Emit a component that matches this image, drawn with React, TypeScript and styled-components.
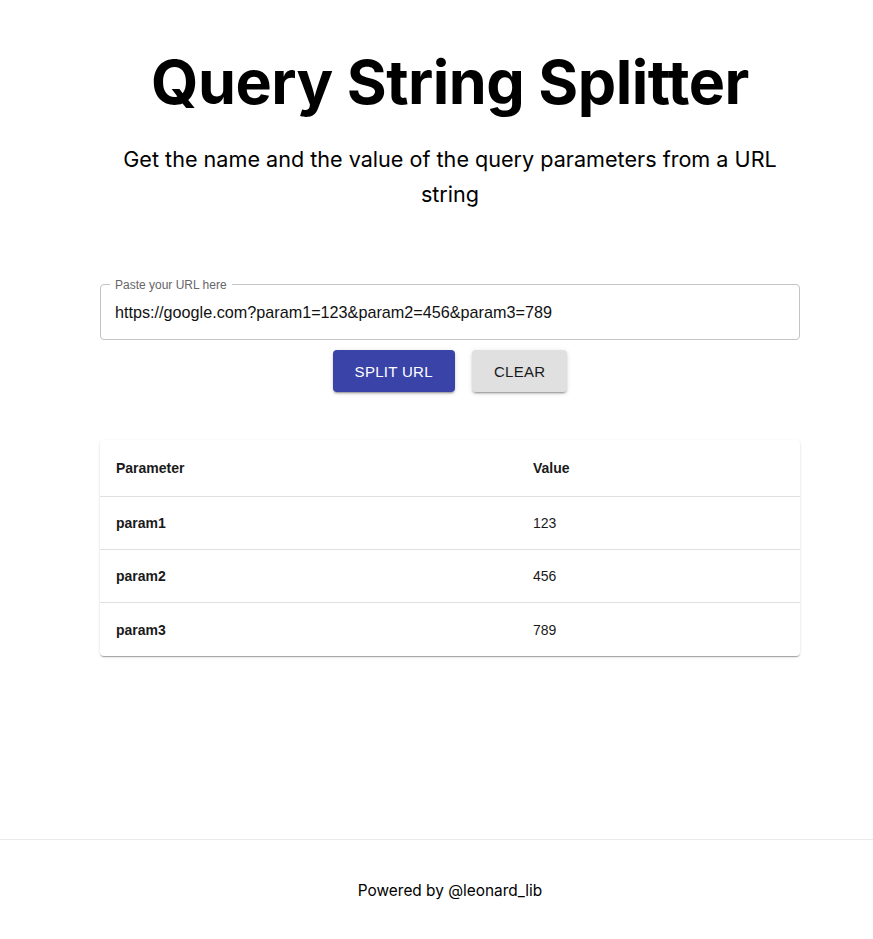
import React, { useState } from "react";
import styled, { createGlobalStyle } from "styled-components";

const Global = createGlobalStyle`
  * { box-sizing: border-box; }
  html, body { margin: 0; padding: 0; background: #fff; }
  body { font-family: Inter, "Noto Sans", sans-serif; color: #000; overflow: hidden; }
`;

const Page = styled.div`
  width: 900px;
  min-height: 939px;
  display: flex;
  flex-direction: column;
`;

const Main = styled.main`
  flex: 1;
  display: flex;
  flex-direction: column;
  align-items: center;
  padding-top: 44px;
`;

const Title = styled.h1`
  margin: 0;
  font-family: Inter, sans-serif;
  font-weight: 700;
  font-size: 61px;
  line-height: 76px;
  letter-spacing: -0.5px;
  text-align: center;
`;

const Subtitle = styled.p`
  margin: 22px 0 0;
  max-width: 680px;
  font-family: Inter, sans-serif;
  font-size: 21.6px;
  line-height: 35px;
  text-align: center;
`;

const Form = styled.div`
  width: 700px;
  margin-top: 72px;
  display: flex;
  flex-direction: column;
  align-items: center;
`;

const Field = styled.div`
  position: relative;
  width: 100%;
  height: 56px;
  padding: 0 14px;
  border: 1px solid #c4c4c4;
  border-radius: 4px;
  display: flex;
  align-items: center;
`;

const FloatLabel = styled.label`
  position: absolute;
  left: 9px;
  top: -7px;
  padding: 0 5px;
  background: #fff;
  font-family: "Liberation Sans", Arial, sans-serif;
  font-size: 12px;
  line-height: 14px;
  color: #666;
`;

const Input = styled.input`
  width: 100%;
  border: none;
  outline: none;
  padding: 0;
  font-family: "Liberation Sans", Arial, sans-serif;
  font-size: 16.2px;
  color: #111;
  background: transparent;
`;

const Buttons = styled.div`
  margin-top: 10px;
  display: flex;
  gap: 17px;
`;

const Button = styled.button<{ $primary?: boolean }>`
  height: 42px;
  padding: 0 22px;
  border: none;
  border-radius: 4px;
  font-family: "Liberation Sans", Arial, sans-serif;
  font-size: 15px;
  letter-spacing: 0.3px;
  text-transform: uppercase;
  cursor: pointer;
  background: ${(p) => (p.$primary ? "#3a43a8" : "#e0e0e0")};
  color: ${(p) => (p.$primary ? "#fff" : "#1a1a1a")};
  box-shadow: 0 3px 1px -2px rgba(0,0,0,0.2), 0 2px 2px 0 rgba(0,0,0,0.14), 0 1px 5px 0 rgba(0,0,0,0.12);
`;

const Card = styled.div`
  width: 700px;
  margin-top: 48px;
  border-radius: 4px;
  background: #fff;
  box-shadow: 0 2px 1px -1px rgba(0,0,0,0.2), 0 1px 1px 0 rgba(0,0,0,0.14), 0 1px 3px 0 rgba(0,0,0,0.12);
  overflow: hidden;
`;

const Row = styled.div<{ $head?: boolean; $last?: boolean }>`
  display: grid;
  grid-template-columns: 417px 1fr;
  height: ${(p) => (p.$head ? "57px" : "53px")};
  border-bottom: ${(p) => (p.$last ? "none" : "1px solid #e0e0e0")};
  align-items: center;
`;

const Cell = styled.div<{ $bold?: boolean }>`
  padding: 0 16px;
  font-family: "Liberation Sans", Arial, sans-serif;
  font-size: 14px;
  font-weight: ${(p) => (p.$bold ? 700 : 400)};
  color: #1a1a1a;
`;

const Footer = styled.footer`
  height: 100px;
  border-top: 1px solid #eaeaea;
  display: flex;
  align-items: center;
  justify-content: center;
  padding-top: 2px;
  font-family: Inter, sans-serif;
  font-size: 15.4px;
`;

const rows = [
  ["param1", "123"],
  ["param2", "456"],
  ["param3", "789"],
];

export default function App() {
  const [url, setUrl] = useState("https://google.com?param1=123&param2=456&param3=789");
  return (
    <Page>
      <Global />
      <Main>
        <Title>Query String Splitter</Title>
        <Subtitle>Get the name and the value of the query parameters from a URL string</Subtitle>
        <Form>
          <Field>
            <FloatLabel htmlFor="url">Paste your URL here</FloatLabel>
            <Input id="url" value={url} onChange={(e) => setUrl(e.target.value)} />
          </Field>
          <Buttons>
            <Button $primary>Split URL</Button>
            <Button onClick={() => setUrl("")}>Clear</Button>
          </Buttons>
        </Form>
        <Card>
          <Row $head>
            <Cell $bold>Parameter</Cell>
            <Cell $bold>Value</Cell>
          </Row>
          {rows.map(([k, v], i) => (
            <Row key={k} $last={i === rows.length - 1}>
              <Cell $bold>{k}</Cell>
              <Cell>{v}</Cell>
            </Row>
          ))}
        </Card>
      </Main>
      <Footer>Powered by @leonard_lib</Footer>
    </Page>
  );
}
